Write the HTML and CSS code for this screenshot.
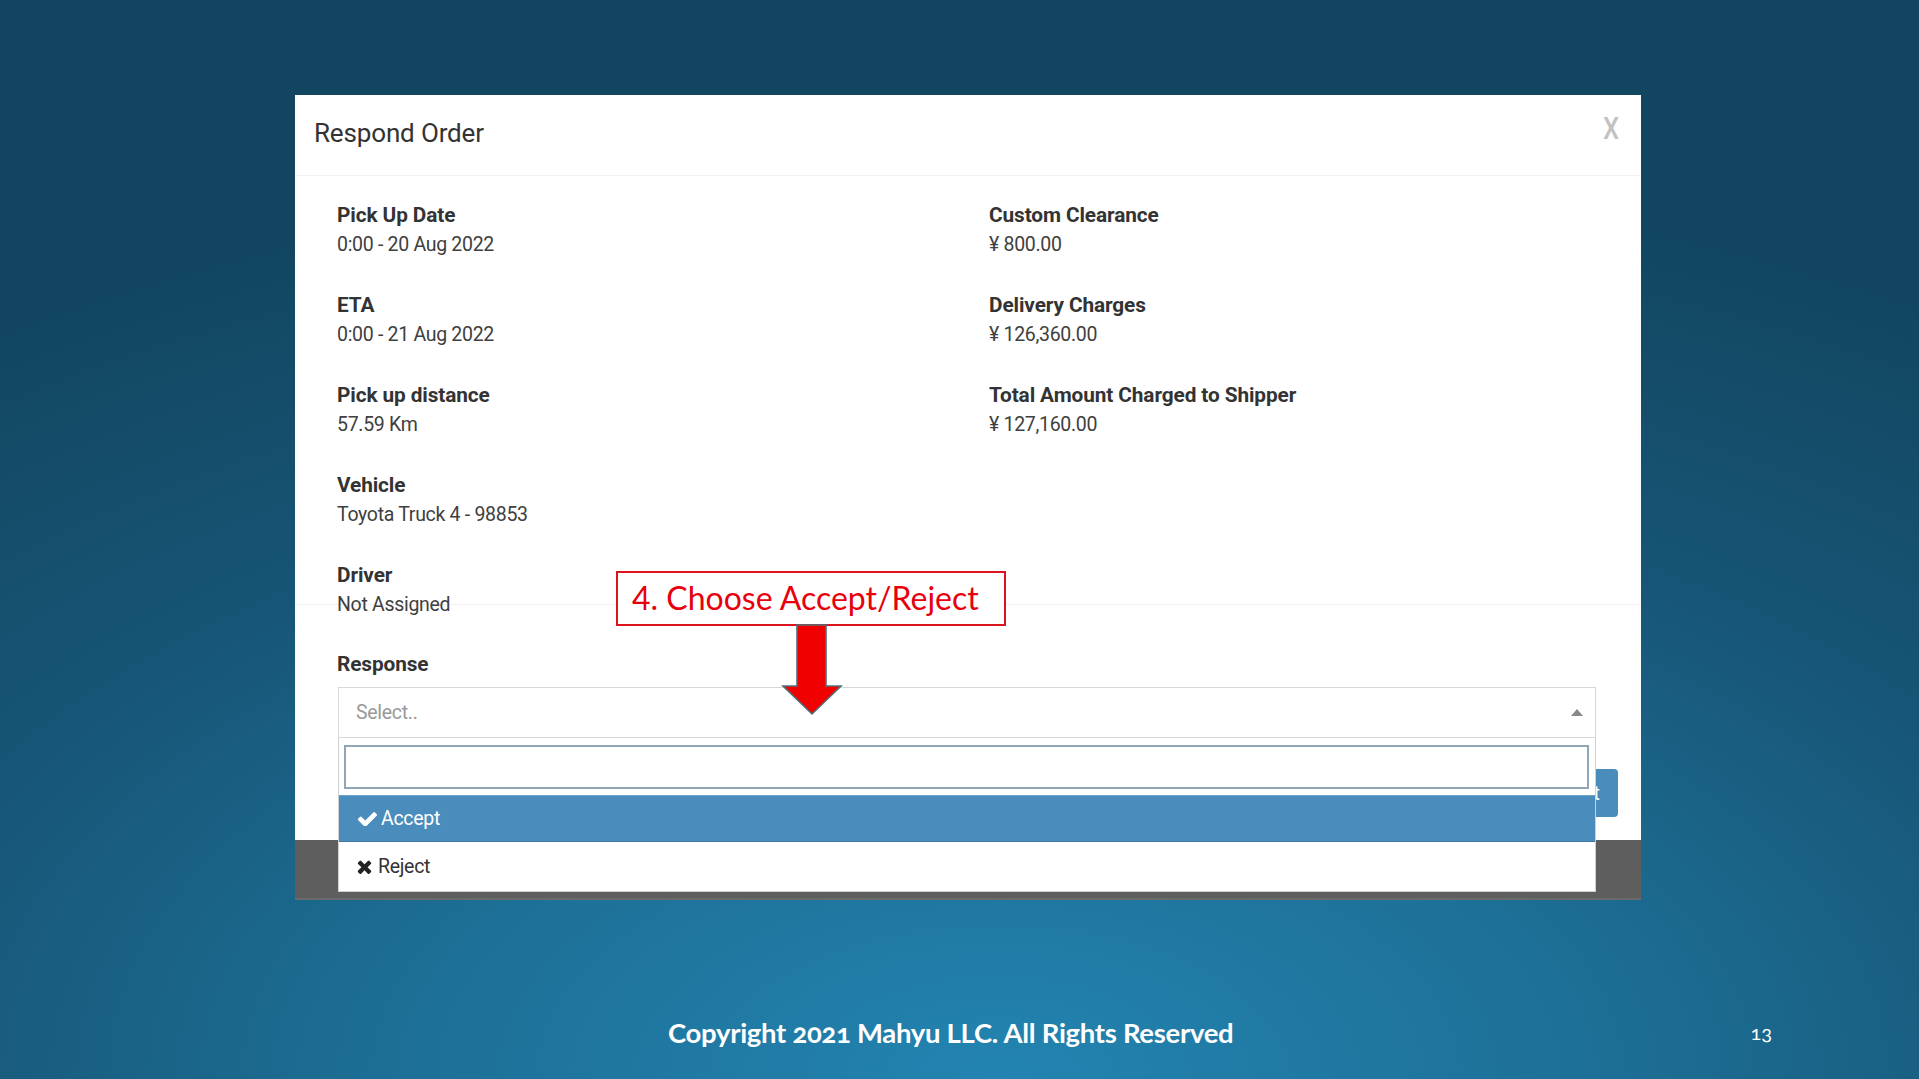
FILE: index.html
```html
<!DOCTYPE html>
<html lang="en">
<head>
<meta charset="utf-8">
<title>Respond Order</title>
<link rel="stylesheet" href="styles.css">
</head>
<body>
<div class="slide">
  <div class="modal">
    <div class="modal-header">
      <h4 class="modal-title">Respond Order</h4>
      <span class="close">X</span>
    </div>
    <div class="modal-body">
      <div class="info-grid">
        <div class="col">
          <div class="field"><div class="label">Pick Up Date</div><div class="value">0:00 - 20 Aug 2022</div></div>
          <div class="field"><div class="label">ETA</div><div class="value">0:00 - 21 Aug 2022</div></div>
          <div class="field"><div class="label">Pick up distance</div><div class="value">57.59 Km</div></div>
          <div class="field"><div class="label">Vehicle</div><div class="value">Toyota Truck 4 - 98853</div></div>
          <div class="field"><div class="label">Driver</div><div class="value">Not Assigned</div></div>
        </div>
        <div class="col">
          <div class="field"><div class="label">Custom Clearance</div><div class="value">¥ 800.00</div></div>
          <div class="field"><div class="label">Delivery Charges</div><div class="value">¥ 126,360.00</div></div>
          <div class="field"><div class="label">Total Amount Charged to Shipper</div><div class="value">¥ 127,160.00</div></div>
        </div>
      </div>
    </div>
    <div class="response">
      <div class="label">Response</div>
      <div class="select-wrap">
        <div class="select">
          <span class="placeholder">Select..</span>
          <span class="caret"></span>
        </div>
        <div class="dropdown">
          <div class="search"></div>
          <div class="option active">
            <svg class="ico ico-check" viewBox="46 338 1625 1116"><path d="M1671 566q0 40-28 68l-724 724-136 136q-28 28-68 28t-68-28l-136-136-362-362q-28-28-28-68t28-68l136-136q28-28 68-28t68 28l294 295 656-657q28-28 68-28t68 28l136 136q28 28 28 68z"/></svg>
            <span>Accept</span>
          </div>
          <div class="option">
            <svg class="ico ico-times" viewBox="110 228 1188 1326"><path d="M1298 1322q0 40-28 68l-136 136q-28 28-68 28t-68-28l-294-294-294 294q-28 28-68 28t-68-28l-136-136q-28-28-28-68t28-68l294-294-294-294q-28-28-28-68t28-68l136-136q28-28 68-28t68 28l294 294 294-294q28-28 68-28t68 28l136 136q28 28 28 68t-28 68l-294 294 294 294q28 28 28 68z"/></svg>
            <span>Reject</span>
          </div>
        </div>
      </div>
      <div class="btn-row">
        <button class="btn">Submit</button>
      </div>
    </div>
    <div class="modal-footer"></div>

    <div class="callout">4. Choose Accept/Reject</div>
    <svg class="arrow" viewBox="0 0 60 90" width="60" height="90">
      <polygon points="15,0 44,0 44,61 59,61 30,89 1,61 15,61" fill="#f00000" stroke="#4f6f78" stroke-width="1.6" stroke-linejoin="miter"/>
    </svg>
  </div>

  <div class="slide-footer">
    <span class="copyright">Copyright 2021 Mahyu LLC. All Rights Reserved</span>
    <span class="page-num">13</span>
  </div>
</div>
</body>
</html>
```

FILE: styles.css
```css
* { box-sizing: border-box; }

html, body {
  margin: 0;
  padding: 0;
}

body {
  width: 1919px;
  height: 1079px;
  overflow: hidden;
  background: radial-gradient(ellipse 90% 85% at 52% 100%, #2384b1 0%, #1d6f96 35%, #175677 65%, #124660 100%);
  font-family: Roboto, "Liberation Sans", sans-serif;
}

.slide {
  padding-top: 95px;
}

.modal {
  position: relative;
  margin-left: 295px;
  width: 1346px;
  background: #fff;
  color: #333;
}

.modal-header {
  height: 81px;
  border-bottom: 1px solid #f1f1f1;
  display: flex;
  justify-content: space-between;
  align-items: flex-start;
  padding: 0 22px 0 19px;
}

.modal-title {
  margin: 23px 0 0 0;
  font-size: 26px;
  font-weight: 400;
  line-height: 30px;
  color: #333;
  letter-spacing: -0.15px;
}

.close {
  margin-top: 16px;
  font-size: 32px;
  line-height: 34px;
  font-weight: 500;
  color: #c2c2c2;
  display: inline-block;
  transform: scaleX(0.8);
  transform-origin: right center;
}

.modal-body {
  height: 429px;
  border-bottom: 1px solid #f0f0f0;
  padding: 24px 0 0 42px;
}

.info-grid {
  display: grid;
  grid-template-columns: 652px 1fr;
}

.field {
  margin-bottom: 30px;
}

.label {
  font-size: 20.8px;
  font-weight: 700;
  line-height: 30px;
  color: #333;
  letter-spacing: -0.1px;
}

.value {
  font-size: 19.5px;
  font-weight: 400;
  line-height: 30px;
  color: #404040;
  letter-spacing: -0.3px;
}

.response {
  height: 235px;
  padding: 44px 23px 25px 42px;
}

.select-wrap {
  position: relative;
  margin-top: 8px;
  margin-right: 22px;
  margin-left: 1px;
}

.select {
  height: 51px;
  border: 1px solid #d8d8d8;
  display: flex;
  align-items: center;
  justify-content: space-between;
  padding: 0 12px 0 17px;
}

.placeholder {
  font-size: 19.5px;
  color: #999;
  letter-spacing: -0.3px;
}

.caret {
  width: 0;
  height: 0;
  border-left: 6px solid transparent;
  border-right: 6px solid transparent;
  border-bottom: 7px solid #888;
}

.dropdown {
  position: absolute;
  top: 100%;
  left: 0;
  right: 0;
  z-index: 5;
  background: #fff;
  border: 1px solid #d0d0d0;
  border-top: none;
  padding-top: 7px;
}

.search {
  height: 44px;
  margin: 0 6px 0 5px;
  border: 2px solid #8ea6b5;
  background: #fff;
}

.option {
  display: flex;
  align-items: center;
  gap: 4px;
  padding-left: 18px;
  font-size: 19.5px;
  color: #333;
  letter-spacing: -0.3px;
}

.option.active {
  margin-top: 6px;
  height: 47px;
  background: #4a8dbc;
  color: #fff;
  border-top: 1px solid #6aa3cb;
  border-bottom: 1px solid #3f7aa3;
}

.option:not(.active) {
  height: 49px;
}

.ico {
  fill: currentColor;
}

.ico-check {
  width: 20px;
  height: 14px;
}

.ico-times {
  width: 15px;
  height: 15px;
  margin-right: 2px;
}

.option:not(.active) .ico {
  fill: #222;
}

.btn-row {
  display: flex;
  justify-content: flex-end;
  margin-top: 31px;
}

.btn {
  height: 48px;
  width: 120px;
  border: none;
  border-radius: 4px;
  background: #4a8dbc;
  color: #fff;
  font-family: Roboto, "Liberation Sans", sans-serif;
  font-size: 19.5px;
  text-align: right;
  padding: 0 18px 0 0;
}

.modal-footer {
  height: 60px;
  background: #5e5e5e;
  border-bottom: 2px solid #6a6a6a;
}

.callout {
  position: absolute;
  left: 321px;
  top: 476px;
  width: 390px;
  height: 55px;
  border: 2.5px solid #dc141e;
  background: #fff;
  color: #e8000d;
  font-family: Lato, "Liberation Sans", sans-serif;
  font-size: 32px;
  line-height: 49px;
  padding-left: 14px;
  white-space: nowrap;
  z-index: 6;
}

.arrow {
  position: absolute;
  left: 487px;
  top: 530px;
  z-index: 7;
  overflow: visible;
}

.slide-footer {
  display: flex;
  align-items: center;
  height: 40px;
  margin-top: 112px;
  padding-left: 668px;
  color: #fff;
  font-family: Lato, "Liberation Sans", sans-serif;
}

.copyright {
  font-size: 27.5px;
  font-weight: 700;
  font-variant-numeric: oldstyle-nums;
  letter-spacing: -0.3px;
}

.page-num {
  margin-left: auto;
  margin-right: 147px;
  font-size: 20px;
  font-variant-numeric: oldstyle-nums;
}
```
